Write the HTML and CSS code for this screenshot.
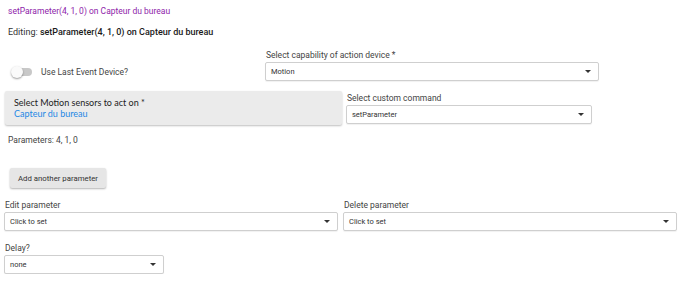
FILE: index.html
```html
<!DOCTYPE html>
<html lang="en">
<head>
    <meta charset="UTF-8">
    <meta name="viewport" content="width=device-width, initial-scale=1.0">
    <title>Edit Action</title>
    <link rel="stylesheet" href="styles.css">
</head>
<body>
    <div class="page">
        <div class="title">setParameter(4, 1, 0) on Capteur du bureau</div>
        <div class="editing">Editing: <b>setParameter(4, 1, 0) on Capteur du bureau</b></div>

        <div class="row row-capability">
            <label class="switch-field">
                <span class="switch"><span class="knob"></span></span>
                <span class="switch-text">Use Last Event Device?</span>
            </label>
            <div class="field field-capability">
                <div class="field-label">Select capability of action device *</div>
                <div class="select"><span>Motion</span><i class="arrow"></i></div>
            </div>
        </div>

        <div class="row row-devices">
            <div class="device-card">
                <div class="card-title">Select Motion sensors to act on *</div>
                <div class="card-value">Capteur du bureau</div>
            </div>
            <div class="field field-command">
                <div class="field-label">Select custom command</div>
                <div class="select"><span>setParameter</span><i class="arrow"></i></div>
            </div>
        </div>

        <div class="params">Parameters: 4, 1, 0</div>

        <button class="add-button">Add another parameter</button>

        <div class="row row-edit">
            <div class="field field-half">
                <div class="field-label">Edit parameter</div>
                <div class="select"><span>Click to set</span><i class="arrow"></i></div>
            </div>
            <div class="field field-half">
                <div class="field-label">Delete parameter</div>
                <div class="select"><span>Click to set</span><i class="arrow"></i></div>
            </div>
        </div>

        <div class="field field-delay">
            <div class="field-label">Delay?</div>
            <div class="select"><span>none</span><i class="arrow"></i></div>
        </div>
    </div>
</body>
</html>
```

FILE: styles.css
```css
body {
    margin: 0;
    padding: 0;
    font-family: Roboto, "Liberation Sans", sans-serif;
    background-color: #fff;
    color: #333;
}

.page {
    padding: 5px 12px 0 4px;
}

.title {
    padding-left: 4px;
    font-size: 8.5px;
    line-height: 12px;
    color: #8e24aa;
}

.editing {
    margin-top: 9px;
    padding-left: 4px;
    font-size: 9px;
    line-height: 12px;
    color: #333;
}

.editing b {
    font-weight: 500;
    color: #1a1a1a;
}

.row {
    display: flex;
}

.row-capability {
    margin-top: 11px;
    align-items: flex-end;
}

.switch-field {
    width: 261px;
    height: 18px;
    display: flex;
    align-items: center;
}

.switch {
    position: relative;
    width: 18px;
    height: 8px;
    margin-left: 10px;
    border-radius: 4px;
    background-color: #c8c8c8;
}

.knob {
    position: absolute;
    left: -3px;
    top: -2px;
    width: 12px;
    height: 12px;
    border-radius: 50%;
    background-color: #fafafa;
    box-shadow: 0 1px 2px rgba(0, 0, 0, 0.4);
}

.switch-text {
    margin-left: 9px;
    font-size: 8.5px;
    color: #444;
}

.field-label {
    font-size: 8.5px;
    line-height: 12px;
    padding-left: 1px;
    margin-bottom: 1px;
    color: #444;
}

.select {
    height: 19px;
    box-sizing: border-box;
    border: 1px solid #cfcfcf;
    border-radius: 2px;
    box-shadow: 0 1px 1px rgba(0, 0, 0, 0.06);
    display: flex;
    align-items: center;
    justify-content: space-between;
    padding: 0 7px 0 5px;
    font-size: 7.5px;
    color: #333;
    background-color: #fff;
}

.arrow {
    width: 0;
    height: 0;
    border-left: 3px solid transparent;
    border-right: 3px solid transparent;
    border-top: 3.5px solid #333;
}

.field-capability {
    width: 334px;
}

.row-devices {
    margin-top: 10px;
    gap: 4px;
    align-items: flex-start;
}

.device-card {
    width: 337px;
    height: 34px;
    box-sizing: border-box;
    margin-left: 1px;
    padding: 6px 9px;
    background-color: #ebebeb;
    border-radius: 2px;
    box-shadow: 0 1px 2px rgba(0, 0, 0, 0.25);
    font-family: Lato, "Noto Sans", sans-serif;
}

.card-title {
    font-size: 9px;
    line-height: 11px;
    color: #222;
}

.card-value {
    font-size: 9px;
    line-height: 11px;
    color: #1e88e5;
}

.field-command {
    width: 246px;
    padding-top: 1px;
}

.params {
    margin-top: 9px;
    padding-left: 4px;
    font-size: 8.5px;
    line-height: 12px;
    color: #444;
}

.add-button {
    display: block;
    margin: 22px 0 0 6px;
    width: 96px;
    height: 20px;
    border: none;
    border-radius: 2px;
    background-color: #e6e6e6;
    box-shadow: 0 1px 2px rgba(0, 0, 0, 0.3);
    font-family: Roboto, "Liberation Sans", sans-serif;
    font-size: 7.8px;
    color: #333;
    padding: 0;
}

.row-edit {
    margin-top: 11px;
    gap: 5px;
}

.field-half {
    width: 334px;
}

.field-delay {
    margin-top: 11px;
    width: 160px;
}
```
